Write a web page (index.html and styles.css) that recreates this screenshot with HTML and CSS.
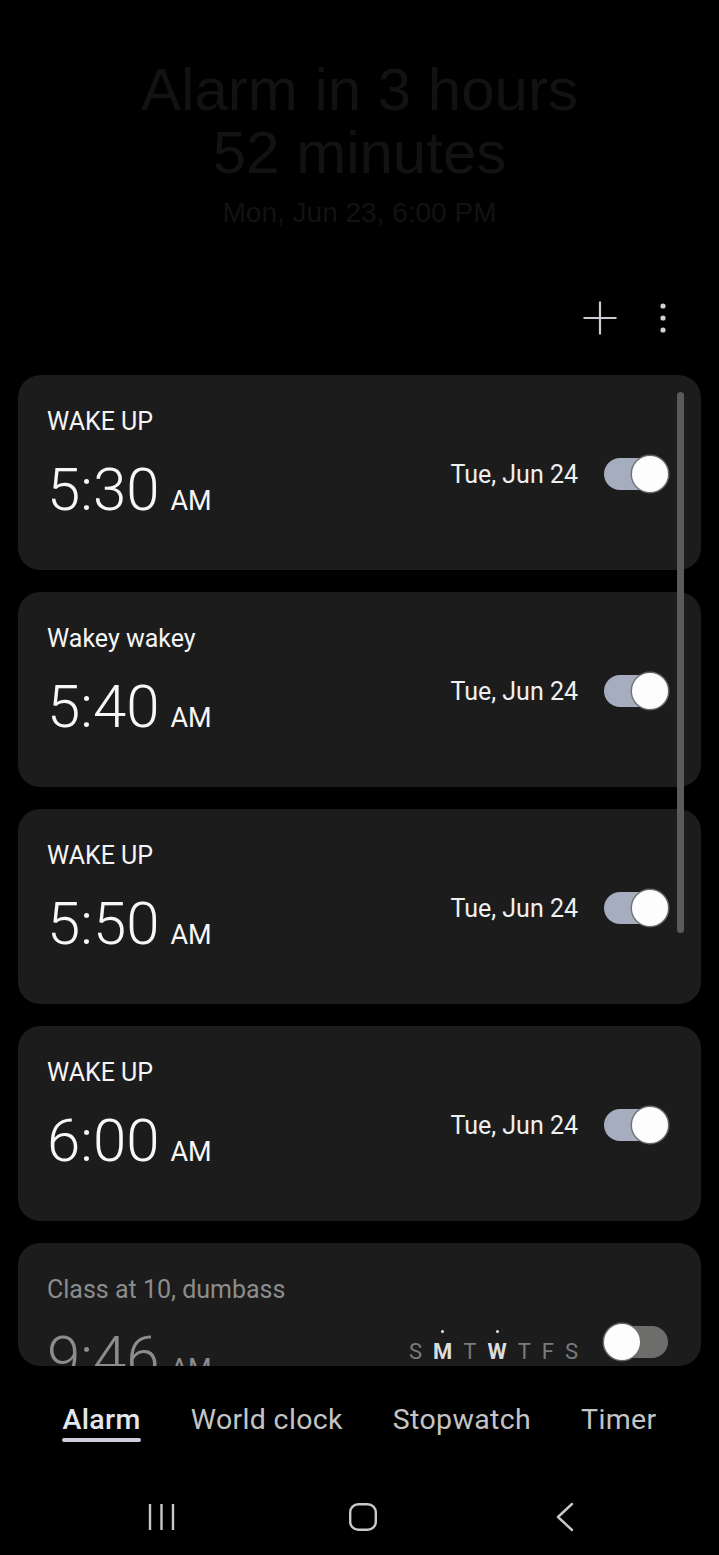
FILE: index.html
```html
<!DOCTYPE html>
<html lang="en">
<head>
<meta charset="utf-8">
<title>Alarm</title>
<link rel="stylesheet" href="styles.css">
</head>
<body>
<div class="screen">
  <header class="summary">
    <div class="summary-title">Alarm in 3 hours<br>52 minutes</div>
    <div class="summary-date">Mon, Jun 23, 6:00 PM</div>
  </header>

  <div class="actions">
    <button class="icon-btn plus" aria-label="Add alarm">
      <svg width="40" height="40" viewBox="0 0 40 40"><path d="M20 3.5V36.5M3.5 20H36.5" stroke="#c9ccd4" stroke-width="2.2" fill="none"/></svg>
    </button>
    <button class="icon-btn more" aria-label="More options">
      <svg width="20" height="40" viewBox="0 0 20 40"><circle cx="10" cy="8" r="2.6" fill="#cfd0d4"/><circle cx="10" cy="20" r="2.6" fill="#cfd0d4"/><circle cx="10" cy="32" r="2.6" fill="#cfd0d4"/></svg>
    </button>
  </div>

  <main class="list">
    <div class="card">
      <div class="card-left">
        <div class="label">WAKE UP</div>
        <div class="time">5:30<span class="ampm">AM</span></div>
      </div>
      <div class="card-right">
        <span class="date">Tue, Jun 24</span>
        <span class="toggle on"></span>
      </div>
    </div>
    <div class="card">
      <div class="card-left">
        <div class="label">Wakey wakey</div>
        <div class="time">5:40<span class="ampm">AM</span></div>
      </div>
      <div class="card-right">
        <span class="date">Tue, Jun 24</span>
        <span class="toggle on"></span>
      </div>
    </div>
    <div class="card">
      <div class="card-left">
        <div class="label">WAKE UP</div>
        <div class="time">5:50<span class="ampm">AM</span></div>
      </div>
      <div class="card-right">
        <span class="date">Tue, Jun 24</span>
        <span class="toggle on"></span>
      </div>
    </div>
    <div class="card">
      <div class="card-left">
        <div class="label">WAKE UP</div>
        <div class="time">6:00<span class="ampm">AM</span></div>
      </div>
      <div class="card-right">
        <span class="date">Tue, Jun 24</span>
        <span class="toggle on"></span>
      </div>
    </div>
    <div class="card inactive">
      <div class="card-left">
        <div class="label">Class at 10, dumbass</div>
        <div class="time">9:46<span class="ampm">AM</span></div>
      </div>
      <div class="card-right">
        <span class="days">
          <span class="day">S</span>
          <span class="day sel">M</span>
          <span class="day">T</span>
          <span class="day sel">W</span>
          <span class="day">T</span>
          <span class="day">F</span>
          <span class="day">S</span>
        </span>
        <span class="toggle off"></span>
      </div>
    </div>
    <div class="scrollbar"></div>
  </main>

  <nav class="tabs">
    <span class="tab active">Alarm</span>
    <span class="tab">World clock</span>
    <span class="tab">Stopwatch</span>
    <span class="tab">Timer</span>
  </nav>

  <div class="navbar">
    <span class="nav-item">
      <svg width="30" height="30" viewBox="0 0 30 30"><path d="M4 2V28M15.5 2V28M27 2V28" stroke="#c8c8c8" stroke-width="2.4" fill="none"/></svg>
    </span>
    <span class="nav-item">
      <svg width="30" height="30" viewBox="0 0 30 30"><rect x="2.2" y="2.2" width="25.6" height="25.6" rx="8" ry="8" stroke="#c8c8c8" stroke-width="2.4" fill="none"/></svg>
    </span>
    <span class="nav-item">
      <svg width="30" height="30" viewBox="0 0 30 30"><path d="M22 2L8 15L22 28" stroke="#c8c8c8" stroke-width="2.4" fill="none" stroke-linecap="round" stroke-linejoin="round"/></svg>
    </span>
  </div>
</div>
</body>
</html>
```

FILE: styles.css
```css
* {
  box-sizing: border-box;
}

html, body {
  margin: 0;
  padding: 0;
  background: #000;
}

body {
  font-family: Roboto, "Noto Sans", "Liberation Sans", sans-serif;
  color: #f2f2f2;
}

.screen {
  width: 719px;
  height: 1555px;
  overflow: hidden;
  display: flex;
  flex-direction: column;
}

/* faded summary header */
.summary {
  height: 270px;
  padding-top: 58px;
  text-align: center;
  font-family: "Liberation Sans", Arial, sans-serif;
  color: #121212;
}

.summary-title {
  font-size: 60px;
  line-height: 63px;
}

.summary-date {
  font-size: 28px;
  line-height: 34px;
  margin-top: 12px;
}

/* action icons */
.actions {
  height: 105px;
  padding-top: 28px;
  padding-right: 46px;
  display: flex;
  justify-content: flex-end;
  align-items: flex-start;
  gap: 33px;
}

.icon-btn {
  border: 0;
  padding: 0;
  margin: 0;
  background: none;
  display: block;
  height: 40px;
}

.icon-btn svg {
  display: block;
}

/* alarm list */
.list {
  position: relative;
  margin: 0 18px;
  height: 991px;
  flex: none;
  overflow: hidden;
  border-radius: 22px;
  display: flex;
  flex-direction: column;
  gap: 22px;
}

.card {
  flex: none;
  height: 195px;
  background: #1c1c1c;
  border-radius: 22px;
  padding: 0 33px 0 29px;
  display: flex;
  justify-content: space-between;
  align-items: center;
}

.card-left {
  align-self: stretch;
  padding-top: 32px;
}

.label {
  font-size: 25px;
  line-height: 30px;
  color: #f4f4f4;
}

.time {
  margin-top: 21px;
  font-size: 60px;
  line-height: 64px;
  font-weight: 300;
  color: #f7f7f7;
  white-space: nowrap;
}

.ampm {
  font-size: 27px;
  font-weight: 400;
  margin-left: 11px;
}

.card-right {
  display: flex;
  align-items: center;
  gap: 26px;
  padding-top: 3px;
}

.date {
  font-size: 25px;
  color: #efefef;
}

.toggle {
  position: relative;
  width: 64px;
  height: 32px;
  border-radius: 16px;
  display: block;
}

.toggle::after {
  content: "";
  position: absolute;
  top: -2px;
  width: 36px;
  height: 36px;
  border-radius: 50%;
  background: #fdfdfd;
  box-shadow: 0 0 0 1.5px rgba(110, 110, 110, 0.9);
}

.toggle.on {
  background: #a5adbf;
}

.toggle.on::after {
  right: 0;
}

.toggle.off {
  background: #6d6d6b;
}

.toggle.off::after {
  left: 0;
}

.inactive .label,
.inactive .time {
  color: #8c8c8c;
}

.days {
  display: flex;
  gap: 11px;
  font-size: 22px;
  line-height: 26px;
  margin-top: 20px;
}

.day {
  position: relative;
  color: #7b7b7b;
}

.day.sel {
  color: #dcdcdc;
  font-weight: 700;
}

.day.sel::before {
  content: "";
  position: absolute;
  top: -9px;
  left: 50%;
  width: 3px;
  height: 3px;
  margin-left: -1.5px;
  border-radius: 50%;
  background: #e6e6e6;
}

.scrollbar {
  position: absolute;
  left: 659px;
  top: 17px;
  width: 7px;
  height: 541px;
  border-radius: 4px;
  background: #5b5b5b;
}

/* bottom tabs */
.tabs {
  height: 104px;
  padding-top: 37px;
  display: flex;
  justify-content: center;
  align-items: flex-start;
  gap: 50px;
}

.tab {
  font-size: 28.5px;
  line-height: 34px;
  letter-spacing: 0.35px;
  color: #c4c4c6;
  display: flex;
  flex-direction: column;
  align-items: stretch;
}

.tab.active {
  color: #e4e6ee;
  font-weight: 500;
}

.tab.active::after {
  content: "";
  height: 4px;
  margin-top: 1px;
  border-radius: 2px;
  background: #cdd0dc;
}

/* system nav bar */
.navbar {
  height: 85px;
  padding-top: 32px;
  padding-left: 6px;
  display: flex;
  justify-content: center;
  align-items: flex-start;
  gap: 172px;
}

.nav-item svg {
  display: block;
}
```
